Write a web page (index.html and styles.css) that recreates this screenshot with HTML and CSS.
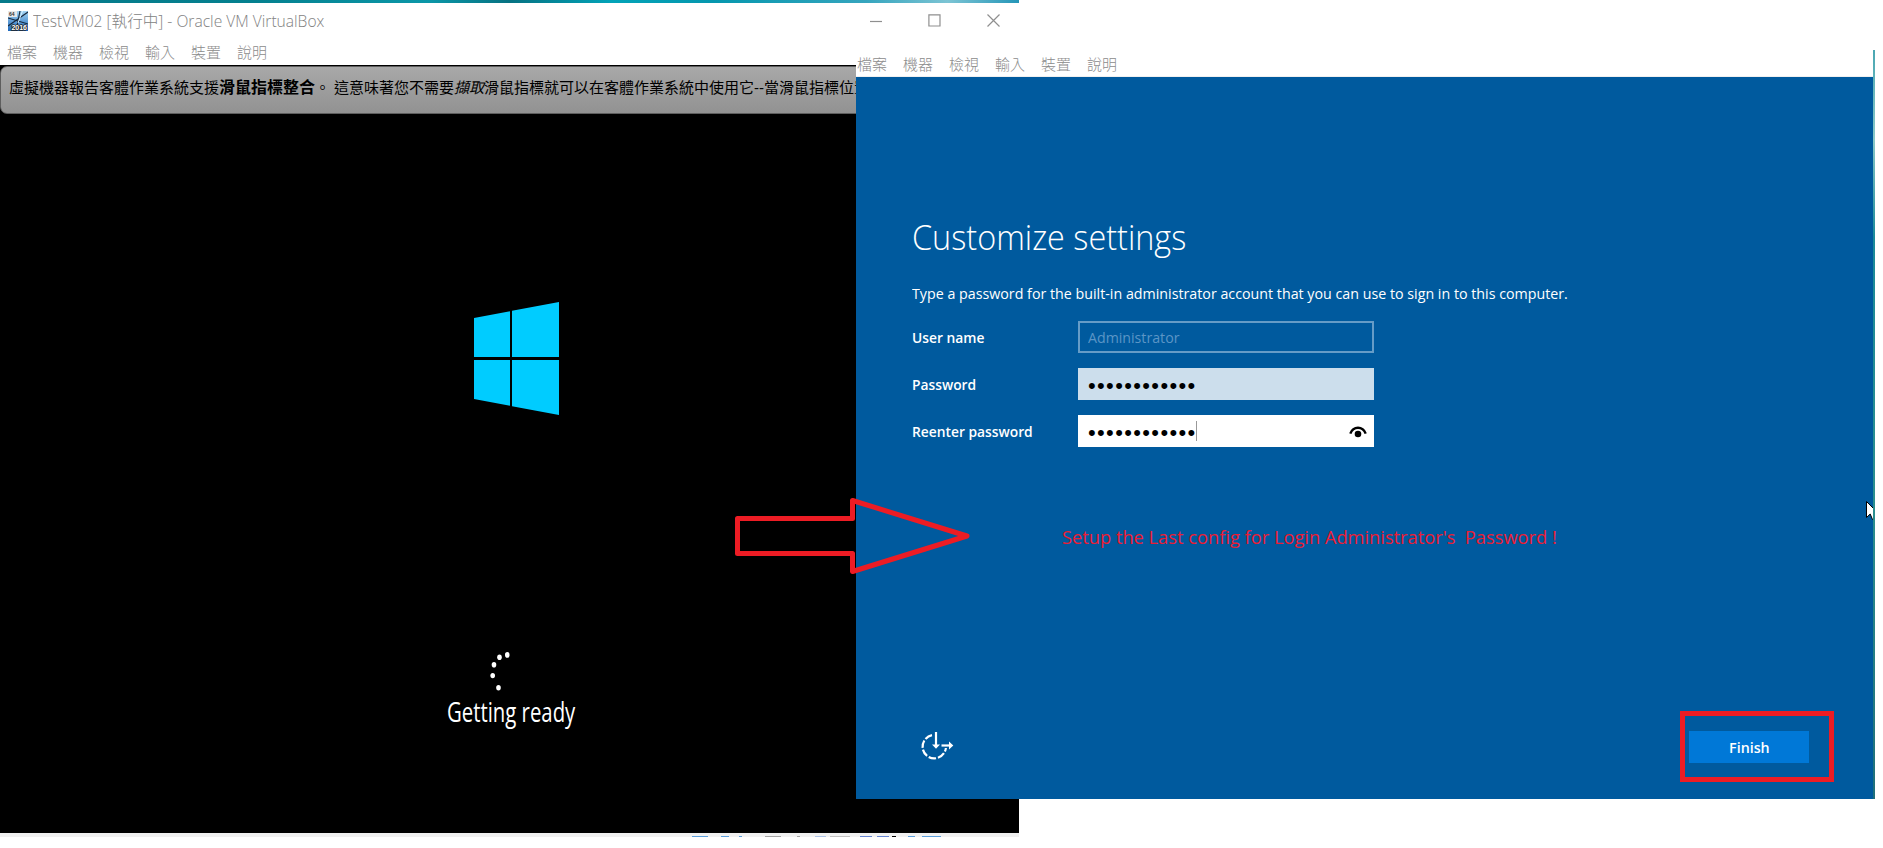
FILE: index.html
```html
<!DOCTYPE html>
<html lang="zh-Hant">
<head>
<meta charset="utf-8">
<title>TestVM02</title>
<link rel="stylesheet" href="styles.css">
</head>
<body>
<main class="desktop">
  <section class="vm vm-boot">
    <div class="wallpaper"></div>
    <header class="titlebar">
      <svg class="app-icon" width="20" height="20" viewBox="0 0 20 20">
        <defs><linearGradient id="ig" x1="0" y1="0" x2="0" y2="1"><stop offset="0" stop-color="#a4d4f2"/><stop offset="1" stop-color="#1d68bc"/></linearGradient></defs>
        <rect width="20" height="20" fill="url(#ig)"/>
        <path d="M12 0L8 20M20 1L0 15M0 7L20 13" stroke="#16273c" stroke-width="1.1"/>
        <path d="M14.500 0L10 12" stroke="#d9f1ff" stroke-width="1"/>
        <rect width="9" height="6" fill="#e8e8e8"/>
        <text x="1" y="5.3" class="icon-64">64</text>
        <text x="3.500" y="18.500" class="icon-year" textLength="15.5" lengthAdjust="spacingAndGlyphs">2016</text>
      </svg>
      <h1 class="title"><span>TestVM02 [執行中] - Oracle VM VirtualBox</span></h1>
      <div class="controls">
        <svg width="12" height="12" viewBox="0 0 12 12"><path d="M0 6.5H12"/></svg>
        <svg width="13" height="13" viewBox="0 0 13 13"><path d="M.9.9H12V12H.9Z"/></svg>
        <svg width="13" height="13" viewBox="0 0 13 13"><path d="M.5.5L12.5 12.5M12.5.5L.5 12.5"/></svg>
      </div>
    </header>
    <nav class="menu"><span>檔案</span><span>機器</span><span>檢視</span><span>輸入</span><span>裝置</span><span>說明</span></nav>
    <div class="screen-boot">
      <p class="banner">虛擬機器報告客體作業系統支援<b>滑鼠指標整合</b>。<span class="gap"></span>這意味著您不需要<i>擷取</i>滑鼠指標就可以在客體作業系統中使用它<span class="dashes">--</span>當滑鼠指標位置</p>
      <svg class="winlogo" width="85" height="113" viewBox="0 0 85 113">
        <path d="M0 16L36 9.3V55H0ZM38 8.8L85 0V55H38ZM0 58H36V103.7L0 97ZM38 58H85V113L38 104.2Z" fill="#0cf"/>
      </svg>
      <svg class="spinner" width="24" height="40" viewBox="0 0 24 40">
        <g fill="#fff"><ellipse cx="19.3" cy="2.9" rx="2.3" ry="2.8"/><ellipse cx="11.5" cy="5.2" rx="2.3" ry="2.8"/><ellipse cx="6" cy="12.7" rx="2.3" ry="2.8"/><ellipse cx="4.7" cy="23.6" rx="2.3" ry="2.7"/><ellipse cx="10.5" cy="35.7" rx="2.3" ry="2.7"/></g>
      </svg>
      <p class="ready"><span>Getting ready</span></p>
    </div>
    <footer class="statusbar">
      <svg width="1019" height="4" viewBox="0 0 1019 4"><g stroke-width="1">
        <path stroke="#5b9fdc" d="M692 3.5h16M721 3.5h8M739 3.5h3M908 3.5h7M922 3.5h19"/>
        <path stroke="#a4a4a4" d="M765 3.5h16M797 3.5h3"/>
        <path stroke="#adc3e6" d="M815 3.5h11"/><path stroke="#c0c0c0" d="M830 3.5h20"/>
        <path stroke="#6685d2" d="M860 3.5h12M877 3.5h12"/><path stroke="#000" d="M892 3.5h4"/>
      </g></svg>
    </footer>
  </section>

  <section class="vm vm-setup">
    <nav class="menu"><span>檔案</span><span>機器</span><span>檢視</span><span>輸入</span><span>裝置</span><span>說明</span></nav>
    <div class="screen-setup">
      <h2 class="heading"><span>Customize settings</span></h2>
      <p class="desc"><span>Type a password for the built-in administrator account that you can use to sign in to this computer.</span></p>
      <form class="form">
        <label><span>User name</span></label><div class="field disabled"><span>Administrator</span></div>
        <label><span>Password</span></label><div class="field filled"><span class="dots">••••••••••••</span></div>
        <label><span>Reenter password</span></label>
        <div class="field active"><span class="dots">••••••••••••</span><i class="caret"></i>
          <svg class="eye" width="18" height="12" viewBox="0 0 18 12"><path d="M1.3 7.6C4.4-.2 13.6-.2 16.7 7.6" fill="none" stroke="#000" stroke-width="2.4"/><circle cx="9" cy="8" r="3.3"/></svg>
        </div>
      </form>
      <p class="note"><span>Setup the Last config for Login Administrator's&nbsp; Password !</span></p>
      <div class="actions">
        <svg class="ease" width="34" height="30" viewBox="0 0 34 30" fill="none" stroke="#fff" stroke-width="2.2">
          <path d="M11 3.2A11.7 11.7 0 1 0 24.900 16" stroke-dasharray="7.600 1.900"/>
          <path d="M15 0V14"/><path d="M20.5 13.500H30"/>
          <path d="M11 12.500H19L15 16.700ZM28 9.500L32.3 13.500L28 17.500Z" fill="#fff" stroke="none"/>
        </svg>
        <div class="highlight"><button class="finish" type="button"><span>Finish</span></button></div>
      </div>
    </div>
    <div class="edge"></div>
  </section>

  <svg class="arrow" width="240" height="84" viewBox="730 494 240 84"><path d="M737.5 518.5H852.5V500.5L967 536L852.5 571.5V553.5H737.5Z" fill="none" stroke="#ed1c24" stroke-width="5" stroke-linejoin="round"/></svg>
  <svg class="cursor" width="7" height="20" viewBox="0 0 7 20"><path d="M.5.5V16.5L4.2 13L6.5 18.5L9 18V9Z" fill="#fff" stroke="#000"/></svg>
</main>
</body>
</html>
```
FILE: styles.css
```css
* { box-sizing: border-box; }
body { margin: 0; background: #fff; }
h1, h2, p { margin: 0; font-weight: 400; }
.desktop { position: relative; width: 1883px; height: 848px; overflow: hidden; font-family: "Open Sans", "Noto Sans CJK TC", sans-serif; }
.desktop span { white-space: pre; }
.vm { position: absolute; display: flex; flex-direction: column; background: #fff; }
.vm-boot { left: 0; top: 0; width: 1019px; height: 837px; }
.vm-setup { left: 856px; top: 50px; width: 1019px; height: 749px; }

.wallpaper { height: 3px; background: linear-gradient(90deg, #067a8a, #04808f 25%, #0b97a8 42%, #067282 50%, #02a3b8 60%, #0597ae 70%, #36a5be 85%, #7cc4d4 93%, #2596b8); }
.titlebar { height: 36px; display: flex; align-items: center; padding: 0 19px 1px 8px; }
.app-icon { flex: none; }
.icon-64 { font: bold 5px "Liberation Sans", sans-serif; fill: #333; }
.icon-year { font: bold 7px "Liberation Sans", sans-serif; fill: #fff; stroke: #222; stroke-width: 1.4px; paint-order: stroke; }
.title { flex: 1; margin: 0 0 0 5px; font: 300 16px/20px "Open Sans", "Noto Sans CJK TC", sans-serif; color: #828282; }
.title span { display: inline-block; transform: scaleX(.975); transform-origin: 0 50%; }
.controls { display: flex; align-items: center; gap: 46px; fill: none; stroke: #8f8f8f; stroke-width: 1.2px; }

.menu { display: flex; gap: 16px; padding-left: 7px; height: 26px; font: 300 15px/25px "Noto Sans CJK TC", sans-serif; color: #8c8c8c; }
.vm-setup .menu { height: 27px; line-height: 27px; padding-left: 1px; border-bottom: 1px solid #f0f0f0; }

.screen-boot { flex: 1; background: #000; display: flex; flex-direction: column; padding-top: 1px; overflow: hidden; }
.banner { height: 48px; border: 1px solid #5e5e5e; border-radius: 7px; background: linear-gradient(#a8a8a8, #929292); padding: 0 0 7px 8px; font: 400 15px/38px "Noto Sans CJK TC", sans-serif; color: #000; white-space: nowrap; overflow: hidden; }
.banner b { font-size: 16px; }
.gap { display: inline-block; width: 4px; }
.dashes { display: inline-block; width: 10px; font-family: "Liberation Sans", sans-serif; }
.winlogo { margin: 188px 0 0 474px; }
.spinner { margin: 237px 0 0 488px; }
.ready { margin: 2px 0 0 447px; font: 400 27px/36px "Open Sans", sans-serif; color: #fff; }
.ready span { display: inline-block; transform: scaleX(.753); transform-origin: 0 50%; }
.statusbar { height: 4px; background: #f0f0f0; display: flex; }

.screen-setup { flex: 1; width: 1017px; background: #005a9e; color: #fff; padding-left: 56px; display: flex; flex-direction: column; }
.desktop .vm-setup h2 span, .desc span, label span, .disabled span, .note span, .finish span { display: inline-block; transform-origin: 0 50%; }
.heading { margin-top: 136px; font: 300 35px/48px "Open Sans", sans-serif; }
.heading span { transform: scaleX(.926); }
.desc { margin-top: 22px; font: 400 15px/20px "Open Sans", sans-serif; }
.desc span { transform: scaleX(.95); }
.form { margin-top: 18px; display: grid; grid-template-columns: 166px 296px; grid-auto-rows: 32px; row-gap: 15px; }
label { font: 600 15px/32px "Open Sans", sans-serif; }
label span { transform: scaleX(.92); }
.field { display: flex; align-items: center; padding-left: 10px; color: #000; }
.disabled { border: 2px solid #669cc7; padding-left: 8px; color: #5b95c6; font-size: 15px; }
.disabled span { transform: scaleX(.945); }
.filled { background: #ccdeec; }
.active { background: #fff; }
.dots { font: 22px/32px "Liberation Sans", sans-serif; letter-spacing: 1.35px; padding-top: 3px; }
.caret { width: 1px; height: 20px; background: #999; margin-left: -1px; }
.eye { margin: 1px 7px 0 auto; }
.note { margin: 75px 0 0 150px; font: 400 19px/30px "Open Sans", sans-serif; color: #ed1c34; }
.note span { transform: scaleX(.961); }
.actions { margin-top: auto; display: flex; justify-content: space-between; padding: 0 39px 17px 0; }
.ease { margin: 21px 0 0 9px; }
.highlight { width: 154px; height: 71px; border: 5px solid #ed1c24; padding: 15px 0 0 4px; }
.finish { width: 120px; height: 32px; padding: 0; border: 0; background: #0078d7; color: #fff; font: 600 15px/32px "Open Sans", sans-serif; }
.finish span { transform: scaleX(.95); transform-origin: 50% 50%; }
.edge { position: absolute; left: 1017px; top: 0; width: 2px; height: 749px; background: linear-gradient(#4aa7b2, #8ac9c9 12%, #1a8a9a 25%, #2b8f8f 60%, #1f6f7a); }
.arrow { position: absolute; left: 730px; top: 494px; }
.cursor { position: absolute; left: 1866px; top: 501px; }
```
